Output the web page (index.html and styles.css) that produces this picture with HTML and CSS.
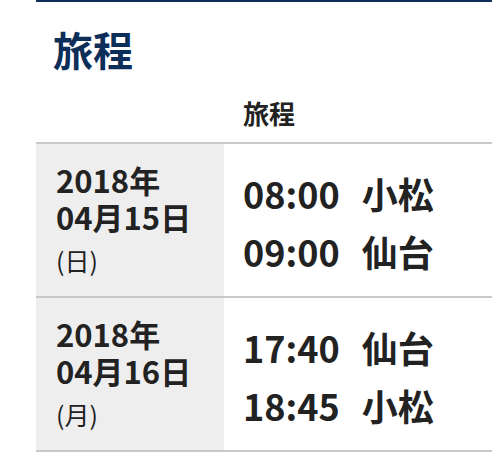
FILE: index.html
```html
<!DOCTYPE html>
<html lang="ja">
<head>
<meta charset="utf-8">
<link rel="stylesheet" href="styles.css">
</head>
<body>
<section class="itinerary">
  <h2 class="title">旅程</h2>
  <div class="row head-row">
    <div class="head-date"></div>
    <div class="head-label">旅程</div>
  </div>
  <div class="row day-row">
    <div class="date">
      <div class="date-main">2018年<br>04月15日</div>
      <div class="weekday">(日)</div>
    </div>
    <div class="legs">
      <div class="leg"><span class="time">08:00</span><span class="place">小松</span></div>
      <div class="leg"><span class="time">09:00</span><span class="place">仙台</span></div>
    </div>
  </div>
  <div class="row day-row">
    <div class="date">
      <div class="date-main">2018年<br>04月16日</div>
      <div class="weekday">(月)</div>
    </div>
    <div class="legs">
      <div class="leg"><span class="time">17:40</span><span class="place">仙台</span></div>
      <div class="leg"><span class="time">18:45</span><span class="place">小松</span></div>
    </div>
  </div>
</section>
</body>
</html>
```
FILE: styles.css
```css
html, body {
  margin: 0;
  padding: 0;
  background: #ffffff;
}
body {
  font-family: "Noto Sans CJK JP", "Noto Sans", sans-serif;
  color: #222222;
}
.itinerary {
  margin-left: 36px;
  border-top: 2px solid #0c2e58;
}
.title {
  margin: 0;
  padding: 23px 0 0 17px;
  font-size: 40px;
  line-height: 48px;
  font-weight: 700;
  color: #0c2e58;
}
.row {
  display: grid;
  grid-template-columns: 188px 1fr;
  border-bottom: 2px solid #c8c8c8;
}
.head-row {
  padding-top: 25px;
  padding-bottom: 14px;
}
.head-label {
  padding-left: 19px;
  font-size: 26px;
  line-height: 30px;
  font-weight: 700;
}
.day-row {
  height: 152px;
}
.date {
  background: #eeeeee;
  padding: 17px 0 0 20px;
}
.date-main {
  font-size: 31px;
  line-height: 37px;
  font-weight: 700;
}
.weekday {
  margin-top: 8px;
  font-size: 25px;
  line-height: 34px;
  font-weight: 400;
}
.legs {
  padding: 20px 0 0 19px;
}
.leg {
  display: flex;
  gap: 22px;
  font-size: 36px;
  line-height: 58px;
  font-weight: 700;
}
```
